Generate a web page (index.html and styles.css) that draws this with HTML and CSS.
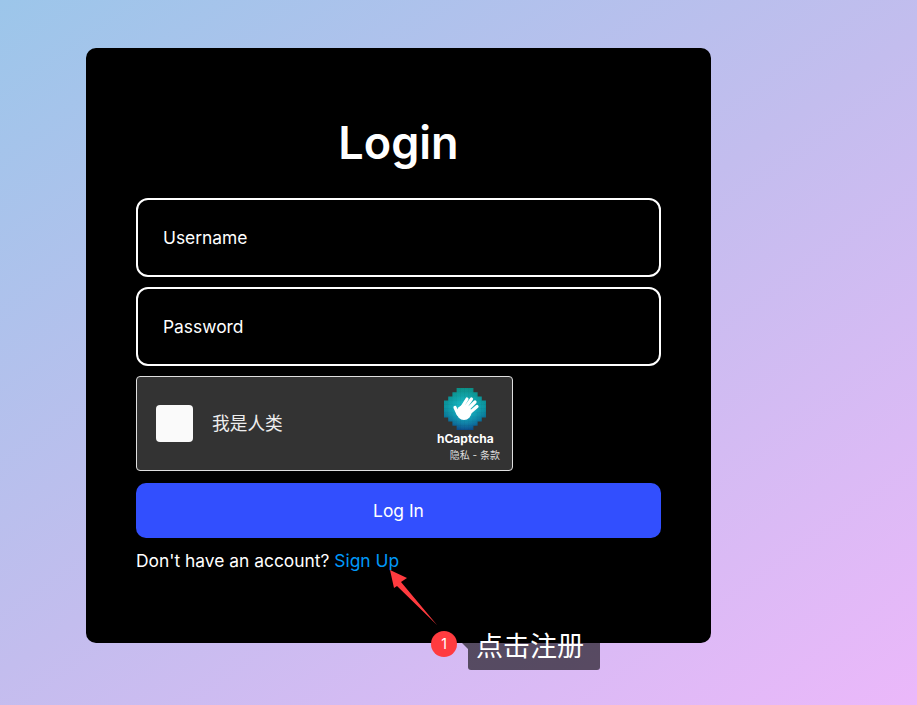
FILE: index.html
```html
<!DOCTYPE html>
<html lang="en">
<head>
    <meta charset="UTF-8">
    <meta name="viewport" content="width=device-width, initial-scale=1.0">
    <title>Login</title>
    <link rel="stylesheet" href="styles.css">
</head>
<body>
    <main class="login-card">
        <h1>Login</h1>
        <form class="login-form">
            <input type="text" name="username" placeholder="Username">
            <input type="password" name="password" placeholder="Password">

            <div class="captcha">
                <div class="captcha-box"></div>
                <span class="captcha-label">我是人类</span>
                <div class="captcha-brand">
                    <svg class="captcha-logo" viewBox="0 0 42 42" width="42" height="42">
                        <defs>
                            <linearGradient id="logoFill" x1="0" y1="0" x2="0" y2="1">
                                <stop offset="0" stop-color="#0c8f86"/>
                                <stop offset="0.45" stop-color="#0a929f"/>
                                <stop offset="1" stop-color="#0c4f8f"/>
                            </linearGradient>
                            <radialGradient id="logoGlow" cx="0.5" cy="0.5" r="0.5">
                                <stop offset="0.35" stop-color="#1fd0dc" stop-opacity="0.55"/>
                                <stop offset="1" stop-color="#1fd0dc" stop-opacity="0"/>
                            </radialGradient>
                            <pattern id="logoCells" width="4.2" height="4.2" patternUnits="userSpaceOnUse">
                                <path d="M4.2 0V4.2H0" fill="none" stroke="#000" stroke-opacity="0.1" stroke-width="0.6"/>
                            </pattern>
                        </defs>
                        <g transform="scale(4.2)">
                            <path d="M3 0H7V1H8V2H9V3H10V7H9V8H8V9H7V10H3V9H2V8H1V7H0V3H1V2H2V1H3Z" fill="url(#logoFill)"/>
                            <path d="M3 0H7V1H8V2H9V3H10V7H9V8H8V9H7V10H3V9H2V8H1V7H0V3H1V2H2V1H3Z" fill="url(#logoGlow)"/>
                        </g>
                        <path d="M12.6 0H29.4V4.2H33.6V8.4H37.8V12.6H42V29.4H37.8V33.6H33.6V37.8H29.4V42H12.6V37.8H8.4V33.6H4.2V29.4H0V12.6H4.2V8.4H8.4V4.2H12.6Z" fill="url(#logoCells)"/>
                        <circle cx="20" cy="24.5" r="7.5" fill="#fff"/>
                        <path d="M18 19 23 11M21 20 27.5 11M24 21 31 14M26 24.5 33 18.5M14 26 11 19.5" stroke="#fff" stroke-width="3.2" stroke-linecap="round" fill="none"/>
                    </svg>
                    <span class="captcha-name">hCaptcha</span>
                    <span class="captcha-terms">隐私 - 条款</span>
                </div>
            </div>

            <button type="submit" class="login-btn">Log In</button>
        </form>
        <p class="signup-text">Don't have an account? <a href="#">Sign Up</a></p>
    </main>

    <!-- Tutorial annotation drawn on top of the page -->
    <svg class="note-arrow" viewBox="0 0 917 705" width="917" height="705">
        <polygon points="390,570 407,578 401,582 437,625 397,586 394,588" fill="#ff3b3f"/>
    </svg>
    <span class="note-badge">1</span>
    <span class="note-label">点击注册</span>
</body>
</html>
```
FILE: styles.css
```css
/* General Styles */
html, body {
    height: 100%;
}

body {
    font-family: Inter, "Noto Sans CJK SC", sans-serif;
    background: linear-gradient(145deg, #9cc6ea 0%, #c3bdee 50%, #ebb8fa 100%);
    margin: 0;
    padding: 48px 0 0 86px;
    box-sizing: border-box;
    position: relative;
    overflow: hidden;
}

.login-card {
    width: 625px;
    height: 595px;
    box-sizing: border-box;
    padding: 62px 50px 0;
    background-color: #000;
    border-radius: 10px;
    color: #fff;
}

.login-card h1 {
    margin: 0 0 22px;
    font-size: 45px;
    line-height: 66px;
    font-weight: 600;
    text-align: center;
}

.login-form {
    display: flex;
    flex-direction: column;
    align-items: flex-start;
}

.login-form input {
    width: 100%;
    height: 79px;
    box-sizing: border-box;
    margin-bottom: 10px;
    padding: 0 25px;
    font-family: inherit;
    font-size: 17.4px;
    color: #fff;
    background: transparent;
    border: 2px solid #fff;
    border-radius: 12px;
    outline: none;
}

.login-form input::placeholder {
    color: #fff;
    opacity: 1;
}

/* Captcha widget */
.captcha {
    width: 377px;
    height: 95px;
    box-sizing: border-box;
    display: flex;
    align-items: center;
    padding: 0 12px 0 19px;
    background-color: #333;
    border: 1px solid #e0e0e0;
    border-radius: 4px;
}

.captcha-box {
    width: 37px;
    height: 37px;
    background-color: #fafafa;
    border-radius: 4px;
}

.captcha-label {
    margin: 0 0 4px 19px;
    font-size: 17.7px;
    color: #eee;
}

.captcha-brand {
    width: 64px;
    margin-left: auto;
    padding-top: 2px;
    display: flex;
    flex-direction: column;
}

.captcha-logo {
    display: block;
    margin-left: 8px;
}

.captcha-name {
    width: 56px;
    margin-top: 1px;
    margin-left: 1px;
    font-size: 12px;
    line-height: 16px;
    font-weight: 700;
    text-align: center;
    white-space: nowrap;
}

.captcha-terms {
    margin-top: 1px;
    font-size: 10px;
    line-height: 14px;
    color: #ddd;
    text-align: right;
    white-space: nowrap;
}

.login-btn {
    width: 100%;
    height: 55px;
    margin-top: 12px;
    font-family: inherit;
    font-size: 17.4px;
    color: #fff;
    background-color: #324ffe;
    border: none;
    border-radius: 10px;
    cursor: pointer;
}

.signup-text {
    margin: 11px 0 0;
    font-size: 17.4px;
    line-height: 24px;
}

.signup-text a {
    color: #0098f8;
    text-decoration: none;
}

/* Annotation overlay */
.note-arrow {
    position: absolute;
    left: 0;
    top: 0;
    pointer-events: none;
}

.note-badge {
    position: absolute;
    left: 431px;
    top: 631px;
    width: 26px;
    height: 26px;
    border-radius: 50%;
    background-color: #ff3b3f;
    color: #fff;
    font-size: 14px;
    line-height: 26px;
    text-align: center;
}

.note-label {
    position: absolute;
    left: 468px;
    top: 622px;
    width: 132px;
    height: 48px;
    box-sizing: border-box;
    padding-left: 8px;
    background-color: rgba(0, 0, 0, 0.6);
    border-radius: 3px;
    color: #fff;
    font-size: 27px;
    line-height: 50px;
    white-space: nowrap;
}

.note-label::before {
    content: "";
    position: absolute;
    left: -6px;
    top: 15px;
    border-style: solid;
    border-width: 6px 6px 6px 0;
    border-color: transparent rgba(0, 0, 0, 0.6) transparent transparent;
}
```
